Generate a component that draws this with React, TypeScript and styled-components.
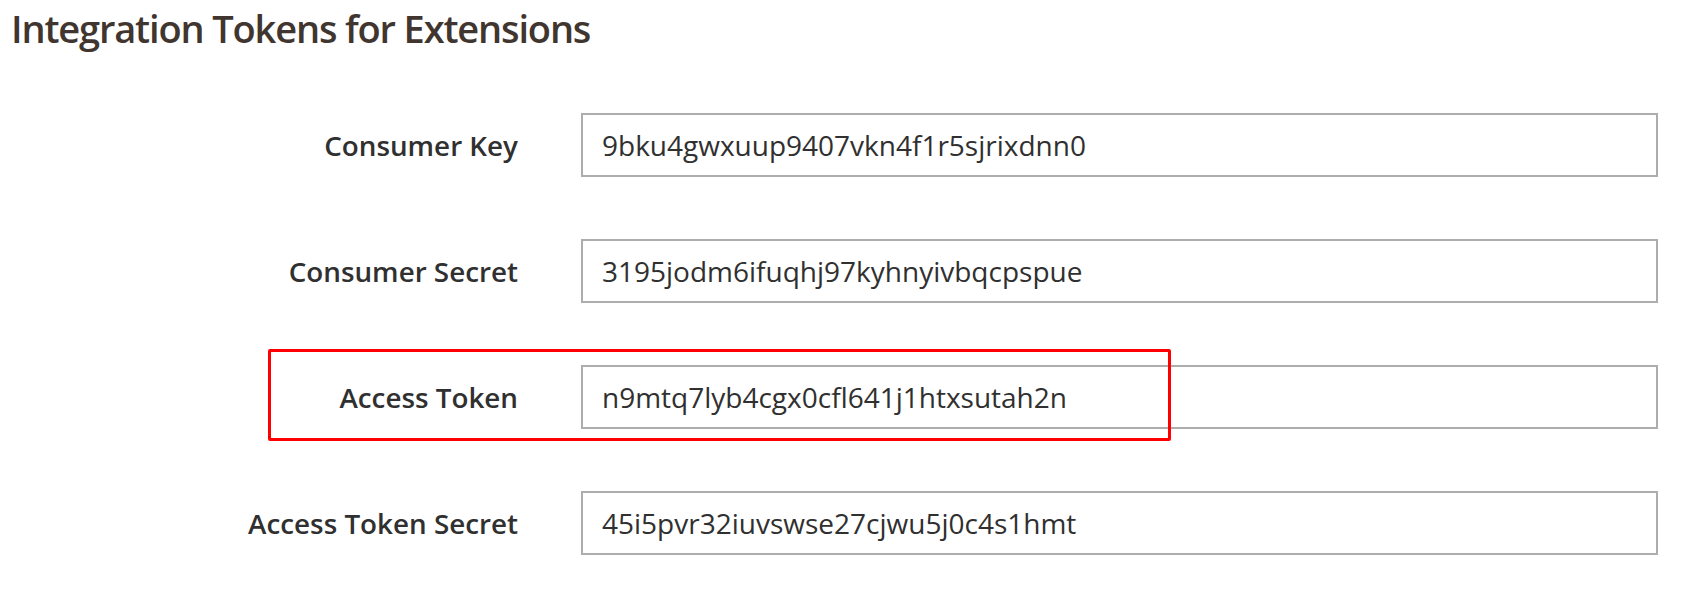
import React from 'react'
import styled, { createGlobalStyle } from 'styled-components'

const GlobalStyle = createGlobalStyle`
  html, body {
    margin: 0;
    padding: 0;
    background: #ffffff;
  }
  body {
    font-family: 'Open Sans', 'Liberation Sans', sans-serif;
  }
`

const tokens = [
  { label: 'Consumer Key', value: '9bku4gwxuup9407vkn4f1r5sjrixdnn0' },
  { label: 'Consumer Secret', value: '3195jodm6ifuqhj97kyhnyivbqcpspue' },
  { label: 'Access Token', value: 'n9mtq7lyb4cgx0cfl641j1htxsutah2n', highlight: true },
  { label: 'Access Token Secret', value: '45i5pvr32iuvswse27cjwu5j0c4s1hmt' },
]

export default function App() {
  return (
    <>
      <GlobalStyle />
      <Page>
        <Title>Integration Tokens for Extensions</Title>
        <Fields>
          {tokens.map((t) => (
            <Row key={t.label}>
              <Label>{t.label}</Label>
              <Field type="text" readOnly value={t.value} />
              {t.highlight && <Highlight />}
            </Row>
          ))}
        </Fields>
      </Page>
    </>
  )
}

const Page = styled.div`
  width: 1690px;
  height: 604px;
  overflow: hidden;
`

const Title = styled.h1`
  margin: 0;
  padding: 9px 0 0 11px;
  font-size: 38px;
  line-height: 38px;
  font-weight: 600;
  letter-spacing: -1.15px;
  color: #41362f;
`

const Fields = styled.div`
  display: flex;
  flex-direction: column;
  gap: 62px;
  margin-top: 66px;
`

const Row = styled.div`
  position: relative;
  display: grid;
  grid-template-columns: 518px 1077px;
  column-gap: 63px;
  align-items: center;
`

const Label = styled.label`
  text-align: right;
  font-size: 27.8px;
  font-weight: 600;
  color: #303030;
`

const Field = styled.input`
  box-sizing: border-box;
  height: 64px;
  width: 100%;
  margin: 0;
  padding: 0 19px;
  border: 2px solid #adadad;
  border-radius: 0;
  background: #fff;
  font-family: 'Open Sans', 'Liberation Sans', sans-serif;
  font-size: 28px;
  color: #303030;
  outline: none;
`

const Highlight = styled.div`
  position: absolute;
  left: 268px;
  top: -16px;
  width: 903px;
  height: 92px;
  box-sizing: border-box;
  border: 3px solid #ff0000;
  border-radius: 2px;
  pointer-events: none;
`
